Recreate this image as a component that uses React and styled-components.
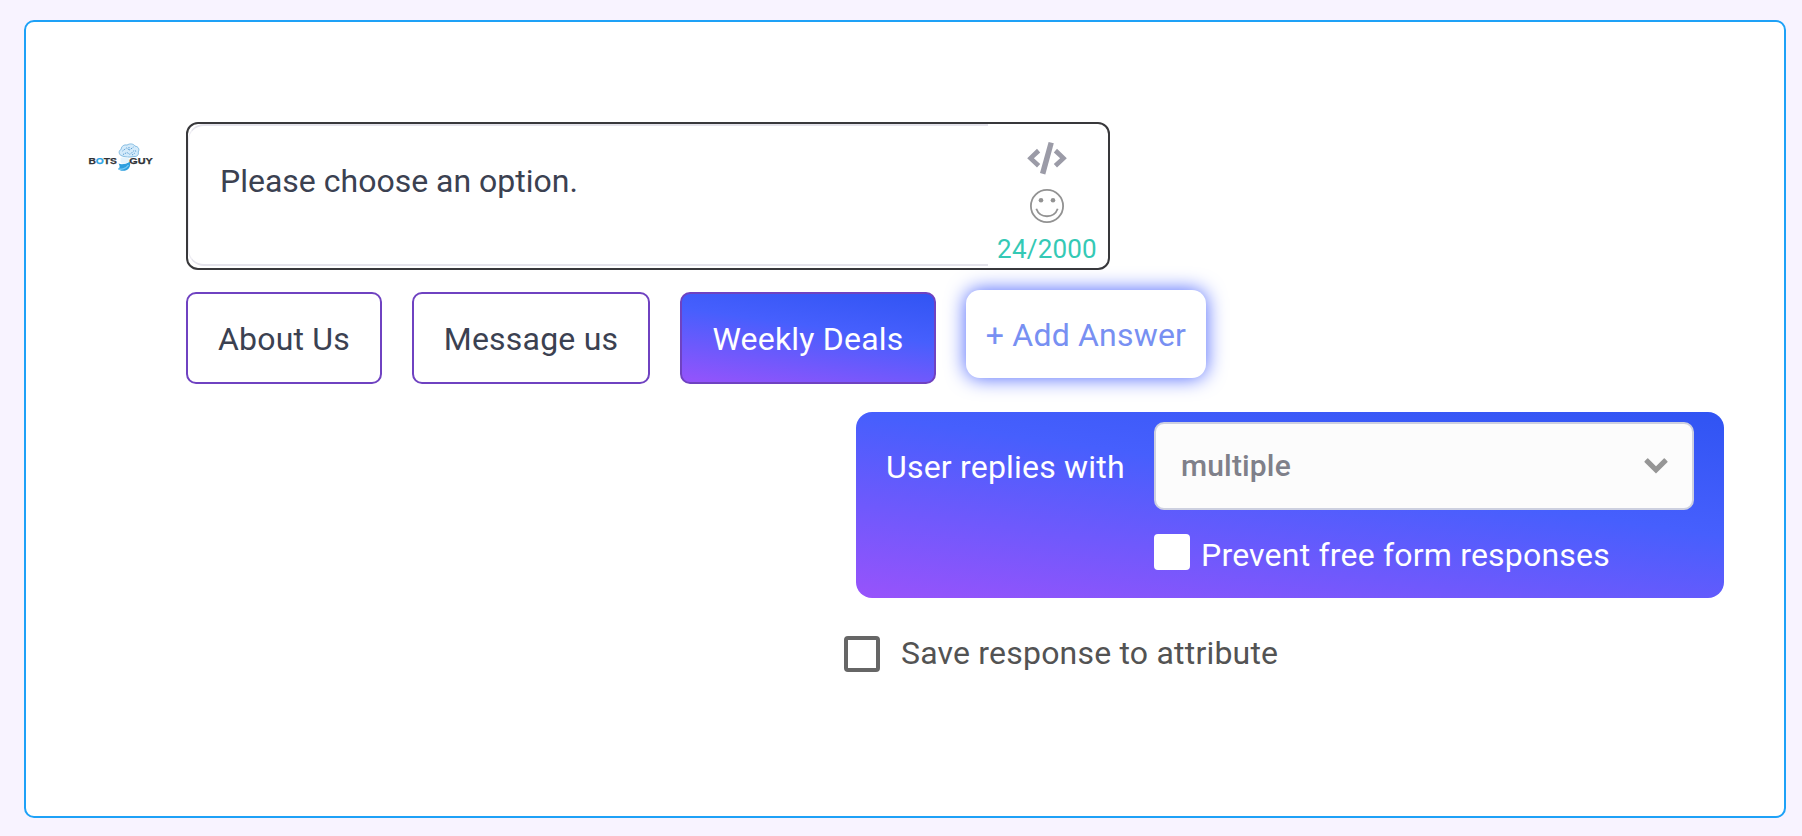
import React, { useState } from 'react'
import styled, { createGlobalStyle } from 'styled-components'

const GlobalStyle = createGlobalStyle`
  * {
    box-sizing: border-box;
  }

  body {
    margin: 0;
    background-color: #f8f3ff;
    font-family: Roboto, 'Liberation Sans', sans-serif;
    font-size: 32px;
    line-height: 40px;
    letter-spacing: 0.2px;
    color: #3b4151;
  }
`

const gradient = 'linear-gradient(8deg, #9853fb 0%, #465ffd 60%, #3054f3 100%)'

const StyledCard = styled.main`
  display: flex;
  height: 798px;
  margin: 20px 16px 18px 24px;
  padding-top: 100px;
  background-color: white;
  border: 2px solid #1ea1f7;
  border-radius: 10px;
`

const Avatar = styled.div`
  width: 160px;
  padding: 16px 0 0 58px;

  svg {
    display: block;
  }
`

const Content = styled.div`
  width: 1538px;
`

const MessageBox = styled.div`
  display: flex;
  width: 924px;
  height: 148px;
  border: 2px solid #38383b;
  border-radius: 12px;
`

const MessageText = styled.div`
  width: 800px;
  height: 142px;
  padding: 35px 31px;
  letter-spacing: 0;
  border: 2px solid #e4e3eb;
  border-left: 1px solid #eeedf3;
  border-right: none;
  border-radius: 16px 0 0 16px;
`

const Tools = styled.div`
  display: flex;
  flex-direction: column;
  align-items: center;
  width: 118px;
  padding-top: 18px;

  svg {
    display: block;
  }

  .emoji {
    margin-top: 14px;
  }
`

const Counter = styled.span`
  margin-top: 10px;
  font-size: 26px;
  line-height: 32px;
  color: #34c9b5;
`

const Answers = styled.div`
  display: flex;
  gap: 30px;
  margin-top: 22px;
`

const Answer = styled.button`
  width: ${({ $width }) => $width}px;
  height: 92px;
  padding: 2px 0 0;
  font: inherit;
  letter-spacing: inherit;
  white-space: nowrap;
  color: ${({ $active }) => ($active ? 'white' : '#3b4151')};
  background: ${({ $active }) => ($active ? gradient : 'white')};
  background-origin: border-box;
  border: 2px solid #6f42c1;
  border-radius: 10px;
`

const AddAnswer = styled.button`
  width: 240px;
  height: 88px;
  margin-top: -2px;
  padding: 2px 0 0;
  font: inherit;
  letter-spacing: inherit;
  white-space: nowrap;
  color: #7890f2;
  background-color: white;
  border: none;
  border-radius: 14px;
  box-shadow: 0 0 20px #4a63fc;
`

const Replies = styled.section`
  display: flex;
  width: 868px;
  height: 186px;
  margin: 28px 0 0 670px;
  padding: 10px 30px;
  color: white;
  background: ${gradient};
  border-radius: 16px;
`

const RepliesLabel = styled.span`
  width: 268px;
  padding-top: 25px;
`

const Select = styled.div`
  display: flex;
  justify-content: space-between;
  align-items: center;
  width: 540px;
  height: 88px;
  padding: 0 24px 0 25px;
  font-size: 30px;
  font-weight: 500;
  letter-spacing: 0.15px;
  color: #7f808a;
  background-color: #fcfcfc;
  border: 2px solid #cdd0e0;
  border-radius: 10px;
`

const Option = styled.label`
  display: flex;
  margin: ${({ $margin }) => $margin};
  gap: ${({ $gap }) => $gap}px;
  color: ${({ $color }) => $color};
`

const Check = styled.span`
  width: 36px;
  height: 36px;
  background-color: white;
  border: 4px solid ${({ $color }) => $color};
  border-radius: 4px;
`

const OptionText = styled.span`
  height: 36px;
  padding-top: ${({ $top }) => $top}px;
  line-height: ${({ $line }) => $line}px;
`

function Logo() {
  return (
    <svg width="72" height="36" viewBox="0 0 72 36">
      <path d="M37 17.5c-2.5-1.5-2.5-5 .2-6.2 0-3.3 3.3-5 5.8-4.2 3-2 6.6-1.3 8 1 3.5.4 4.8 3.4 3.2 5.9.8 3-1.2 4.8-4.2 4.5-4 1-9.5.8-13-1z" fill="#d3eafa" stroke="#78b5df" strokeWidth=".9" />
      <path d="M38.5 13l4-3 3 2 4-3M39 16.5l4-2 3 2 4-4 3 1M45 9v3M48 17l3-2" fill="none" stroke="#4a94ce" strokeWidth=".9" strokeDasharray="1.2 .9" />
      <path d="M34.5 25.5c3 1.5 8 .5 11-2 1.8 4-.2 8.3-4.8 9.2-3 .5-5.7-.5-6.7-2 2-.2 2-3 .5-5.2z" fill="#2c9ede" />
      <path d="M36.5 19.5h7.5l2 3.5c-3 3-6.5 3.5-9.5 1.5z" fill="#e4f3fc" />
      <path d="M34.5 31c3 .8 7.5-.4 10-4" fill="none" stroke="#75c8f3" strokeWidth="1.3" />
      <g fontFamily="Liberation Sans" fontWeight="700" fontSize="9" letterSpacing="0" fill="#303237" stroke="#303237" strokeWidth=".25">
        <text x="4.4" y="26" textLength="28.5" lengthAdjust="spacingAndGlyphs">
          B<tspan fill="#29a3e6" stroke="#29a3e6">O</tspan>TS
        </text>
        <text x="45.3" y="26" textLength="23.5" lengthAdjust="spacingAndGlyphs">GUY</text>
      </g>
    </svg>
  )
}

function CodeIcon() {
  return (
    <svg width="40" height="33" viewBox="0 0 40 33" fill="#9b9ba7">
      <path d="M.2 16.3L10 6.8l3.2 3.6-6.3 5.9 6.3 5.6-3.2 3.5z" />
      <path d="M39.8 16.3L30 6.8l-3.2 3.6 6.3 5.9-6.3 5.6 3.2 3.5z" />
      <path d="M21.6 0l5.2 1.2L18.3 32.4l-5.3-1.3z" />
    </svg>
  )
}

function EmojiIcon() {
  return (
    <svg className="emoji" width="34" height="34" viewBox="0 0 34 34">
      <circle cx="17" cy="17" r="16.1" fill="none" stroke="#929292" strokeWidth="1.8" />
      <circle cx="11" cy="11.3" r="2.3" fill="#929292" />
      <circle cx="23" cy="11.3" r="2.3" fill="#929292" />
      <path d="M6.3 19.8a11.4 11.4 0 0 0 21.4 0" fill="none" stroke="#929292" strokeWidth="1.8" />
    </svg>
  )
}

function ArrowIcon() {
  return (
    <svg width="24" height="16" viewBox="0 0 24 16" fill="#969696">
      <path d="M.6 3.3L3.2.6q.5-.5 1 0L12 8.3 19.8.6q.5-.5 1 0l2.6 2.7q.5.5 0 1L12 15.5.6 4.3q-.5-.5 0-1z" />
    </svg>
  )
}

const answers = [
  { text: 'About Us', width: 196 },
  { text: 'Message us', width: 238 },
  { text: 'Weekly Deals', width: 256 },
]

function App() {
  const [selected, setSelected] = useState('Weekly Deals')
  const message = 'Please choose an option.'

  return (
    <>
      <GlobalStyle />
      <StyledCard>
        <Avatar>
          <Logo />
        </Avatar>
        <Content>
          <MessageBox>
            <MessageText>{message}</MessageText>
            <Tools>
              <CodeIcon />
              <EmojiIcon />
              <Counter>{message.length}/2000</Counter>
            </Tools>
          </MessageBox>
          <Answers>
            {answers.map(({ text, width }) => (
              <Answer key={text} $width={width} $active={text === selected} onClick={() => setSelected(text)}>
                {text}
              </Answer>
            ))}
            <AddAnswer>+ Add Answer</AddAnswer>
          </Answers>
          <Replies>
            <RepliesLabel>User replies with</RepliesLabel>
            <div>
              <Select>
                multiple
                <ArrowIcon />
              </Select>
              <Option $margin="24px 0 0" $gap={11} $color="white">
                <Check $color="white" />
                <OptionText $top={3} $line={36}>Prevent free form responses</OptionText>
              </Option>
            </div>
          </Replies>
          <Option $margin="38px 0 0 658px" $gap={21} $color="#535353">
            <Check $color="#666666" />
            <OptionText $top={0} $line={34}>Save response to attribute</OptionText>
          </Option>
        </Content>
      </StyledCard>
    </>
  )
}

export default App
